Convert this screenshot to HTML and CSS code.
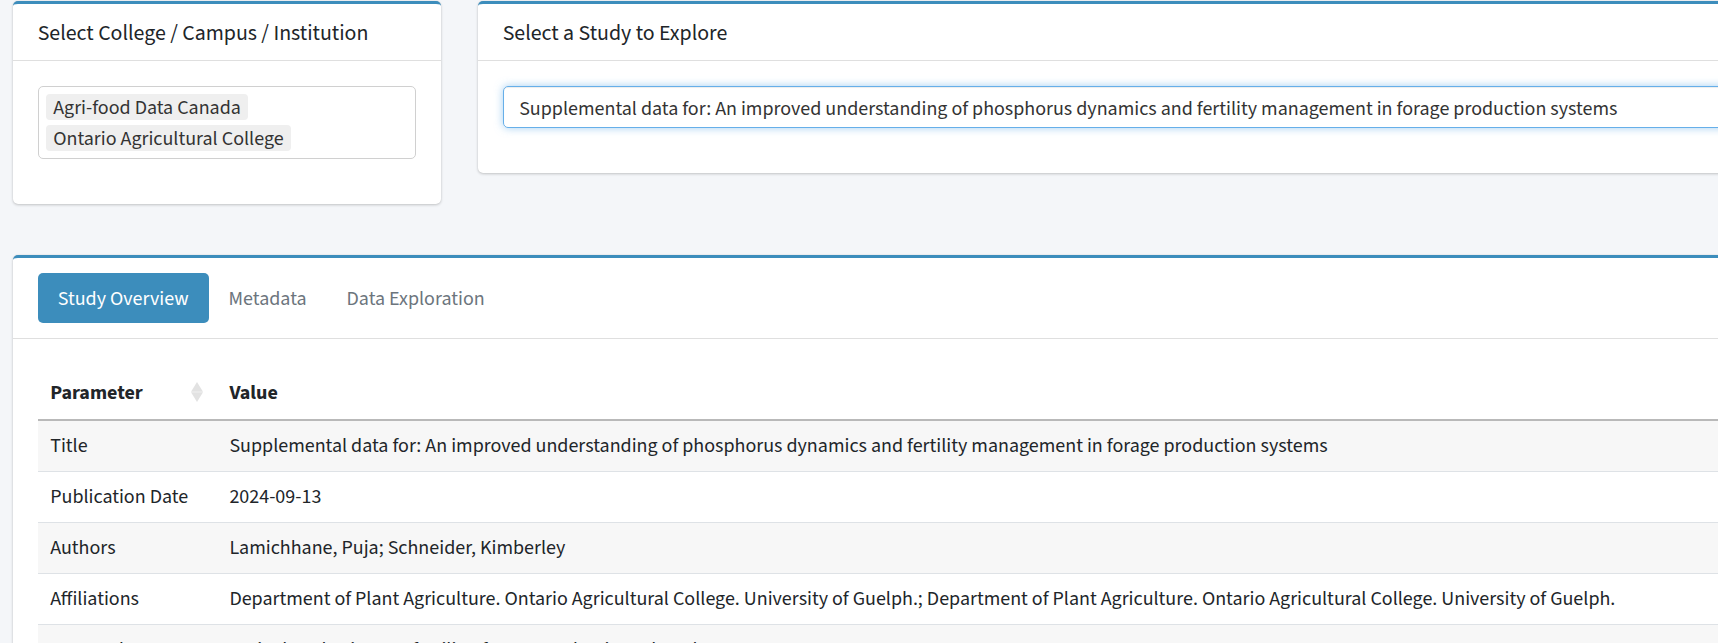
FILE: index.html
```html
<!DOCTYPE html>
<html lang="en">
<head>
<meta charset="utf-8">
<title>Study Explorer</title>
<link rel="stylesheet" href="styles.css">
</head>
<body>
<div class="page">
  <div class="row-top">
    <section class="card card-inst">
      <div class="card-header"><h3 class="card-title">Select College / Campus / Institution</h3></div>
      <div class="card-body">
        <div class="form-group">
          <div class="multi-select">
            <span class="tag">Agri-food Data Canada</span>
            <span class="tag">Ontario Agricultural College</span>
          </div>
        </div>
      </div>
    </section>
    <section class="card card-study">
      <div class="card-header"><h3 class="card-title">Select a Study to Explore</h3></div>
      <div class="card-body">
        <div class="form-group">
          <div class="single-select">Supplemental data for: An improved understanding of phosphorus dynamics and fertility management in forage production systems</div>
        </div>
      </div>
    </section>
  </div>

  <section class="card card-main">
    <div class="card-header tabs-header">
      <ul class="nav-pills">
        <li><a class="nav-link active">Study Overview</a></li>
        <li><a class="nav-link">Metadata</a></li>
        <li><a class="nav-link">Data Exploration</a></li>
      </ul>
    </div>
    <div class="card-body">
      <table class="dt">
        <colgroup><col class="col-param"><col class="col-value"></colgroup>
        <thead>
          <tr>
            <th class="sorting">Parameter
              <svg class="sort-icon" width="12" height="20" viewBox="0 0 12 20"><polygon points="6,0 12,9.8 0,9.8"/><polygon points="0,10.2 12,10.2 6,20"/></svg>
            </th>
            <th>Value</th>
          </tr>
        </thead>
        <tbody>
          <tr class="odd"><td>Title</td><td>Supplemental data for: An improved understanding of phosphorus dynamics and fertility management in forage production systems</td></tr>
          <tr class="even"><td>Publication Date</td><td>2024-09-13</td></tr>
          <tr class="odd"><td>Authors</td><td>Lamichhane, Puja; Schneider, Kimberley</td></tr>
          <tr class="even"><td>Affiliations</td><td>Department of Plant Agriculture. Ontario Agricultural College. University of Guelph.; Department of Plant Agriculture. Ontario Agricultural College. University of Guelph.</td></tr>
          <tr class="odd"><td>Keywords</td><td>Agricultural Sciences; fertility; forage production; phosphorus</td></tr>
        </tbody>
      </table>
    </div>
  </section>
</div>
</body>
</html>
```
FILE: styles.css
```css
html { overflow: hidden; }
body {
  margin: 0;
  background: #f4f6f9;
  color: #212529;
  font-family: "Source Sans 3", "Source Sans Pro", Lato, sans-serif;
  font-size: 20px;
  line-height: 1.5;
}
.page {
  padding: 1px 0 0 12.7px;
  width: 1800px;
}
.row-top {
  display: flex;
  align-items: flex-start;
  gap: 36.4px;
}
.card {
  background: #fff;
  border-top: 3px solid #3c8dbc;
  border-radius: 5px;
  box-shadow: 0 0 1px rgba(0,0,0,.125), 0 1px 3px rgba(0,0,0,.2);
}
.card-inst { width: 428.6px; flex: none; }
.card-study { width: 1300px; flex: none; }
.card-main { width: 1780px; margin-top: 51.6px; }
.card-header {
  padding: 16.8px 25px 13.2px;
  border-bottom: 1px solid rgba(0,0,0,.125);
}
.card-title {
  margin: 0;
  font-size: 21.875px;
  font-weight: 400;
  line-height: 1.2;
}
.tabs-header { padding: 15px 25px; }
.card-body { padding: 25px; }
.form-group { margin-bottom: 20px; }

.multi-select {
  border: 1px solid #d0d0d0;
  border-radius: 5px;
  padding: 6.5px 7.5px;
  display: flex;
  flex-wrap: wrap;
  row-gap: 4.6px;
  column-gap: 3.75px;
}
.tag {
  background: #efefef;
  color: #333;
  border-radius: 4px;
  padding: 3.4px 7px 0.6px;
  line-height: 22.4px;
}
.single-select {
  border: 1px solid #66afe9;
  border-radius: 5px;
  padding: 6.8px 15.5px 3.2px;
  line-height: 30px;
  white-space: nowrap;
  color: #333;
  box-shadow: inset 0 1px 1px rgba(0,0,0,.075), 0 0 8px rgba(102,175,233,.6);
}

.nav-pills {
  list-style: none;
  margin: 0;
  padding: 0;
  display: flex;
}
.nav-link {
  display: block;
  padding: 11px 20px 9px;
  line-height: 30px;
  color: #6c757d;
  border-radius: 5px;
}
.nav-link.active {
  background: #3c8dbc;
  color: #fff;
}

.dt {
  width: 100%;
  table-layout: fixed;
  border-collapse: separate;
  border-spacing: 0;
  margin-top: 4.5px;
}
.col-param { width: 179.2px; }
.dt th, .dt td {
  padding: 10px 12.5px;
  text-align: left;
  line-height: 30px;
  white-space: nowrap;
}
.dt th {
  font-weight: 700;
  padding-top: 9px;
  padding-bottom: 11px;
  border-bottom: 2px solid #b9b9b9;
}
.dt th.sorting { position: relative; }
.sort-icon {
  position: absolute;
  right: 14.2px;
  top: 13px;
  fill: #e2e2e2;
}
.dt td { border-bottom: 1px solid #dee2e6; }
.dt tr.odd td { background: #f7f7f7; }
```
